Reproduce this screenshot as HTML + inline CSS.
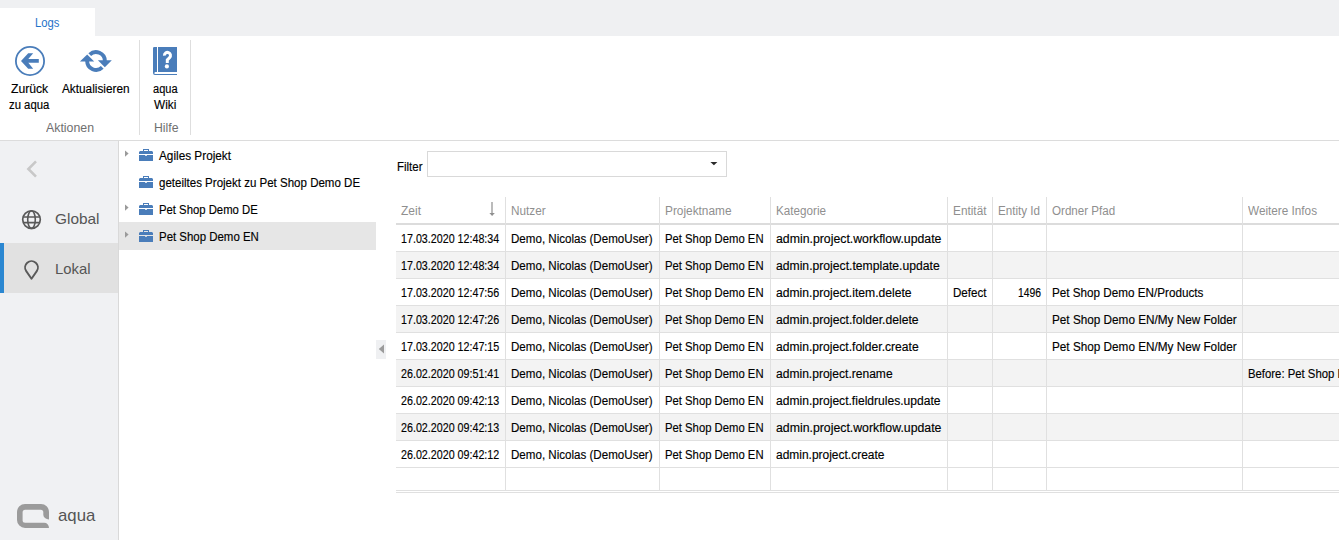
<!DOCTYPE html>
<html><head><meta charset="utf-8"><style>
html,body{margin:0;padding:0;}
body{width:1339px;height:540px;overflow:hidden;position:relative;background:#fff;font-family:"Liberation Sans",sans-serif;}
.t{position:absolute;white-space:nowrap;transform-origin:0 0;}
svg{display:block}
</style></head><body>
<div style="position:absolute;left:0;top:0;width:1339px;height:36px;background:#eff0f2"></div>
<div style="position:absolute;left:0;top:8px;width:95px;height:28px;background:#fff"></div>
<div class="t" style="left:35.4px;top:16.94px;font-size:12px;line-height:13.80px;color:#1f72c9;transform:scaleX(0.9379);">Logs</div>
<div style="position:absolute;left:0;top:140px;width:1339px;height:1px;background:#dcdcdc"></div>
<div style="position:absolute;left:139px;top:40px;width:1px;height:95px;background:#dedede"></div>
<div style="position:absolute;left:190px;top:40px;width:1px;height:95px;background:#dedede"></div>
<svg style="position:absolute;left:0;top:36px" width="60" height="50" viewBox="0 36 60 50">
<circle cx="30" cy="61" r="14.1" fill="none" stroke="#4a7dba" stroke-width="1.8"/>
<path d="M21,61 L28.2,53.3 L33.2,53.3 L28.3,59.1 L38.8,59.1 L38.8,62.8 L28.3,62.8 L33.2,68.7 L28.2,68.7 Z" fill="#4a7dba"/>
</svg>
<svg style="position:absolute;left:70px;top:40px" width="50" height="40" viewBox="70 40 50 40">
<path d="M89.74,54.74 A8.85,8.85 0 0 1 104.85,61" fill="none" stroke="#4a7dba" stroke-width="3.9"/>
<path d="M102.26,67.26 A8.85,8.85 0 0 1 87.15,61" fill="none" stroke="#4a7dba" stroke-width="3.9"/>
<path d="M79.9,61.6 L87.2,54.6 L94.2,61.6 Z" fill="#4a7dba"/>
<path d="M97.9,60.3 L111.8,60.3 L104.8,67.2 Z" fill="#4a7dba"/>
</svg>
<svg style="position:absolute;left:150px;top:44px" width="30" height="34" viewBox="150 44 30 34">
<path d="M154.2,47 H157 V72 H155.3 A1.3,1.3 0 0 0 154.3,73.2 A1,1 0 0 0 155.3,74 H177 V75 H155 A2,2 0 0 1 153,73 V48.2 A1.2,1.2 0 0 1 154.2,47 Z" fill="#4a7dba"/>
<rect x="158" y="47" width="19" height="25" fill="#4a7dba"/>
<path d="M164.4,55.6 A3.05,3.05 0 1 1 169.6,57.6 L167.3,59.8 V63" fill="none" stroke="#fff" stroke-width="3"/>
<circle cx="166.9" cy="66.4" r="2.1" fill="#fff"/>
</svg>
<div class="t" style="left:11px;top:82.94px;font-size:12px;line-height:13.80px;color:#000;-webkit-text-stroke:0.15px currentColor;transform:scaleX(1.0144);">Zurück</div>
<div class="t" style="left:9px;top:98.94px;font-size:12px;line-height:13.80px;color:#000;-webkit-text-stroke:0.15px currentColor;transform:scaleX(0.9441);">zu aqua</div>
<div class="t" style="left:62px;top:82.94px;font-size:12px;line-height:13.80px;color:#000;-webkit-text-stroke:0.15px currentColor;transform:scaleX(0.9825);">Aktualisieren</div>
<div class="t" style="left:152.5px;top:82.94px;font-size:12px;line-height:13.80px;color:#000;-webkit-text-stroke:0.15px currentColor;transform:scaleX(0.9180);">aqua</div>
<div class="t" style="left:154.4px;top:98.94px;font-size:12px;line-height:13.80px;color:#000;-webkit-text-stroke:0.15px currentColor;transform:scaleX(0.9836);">Wiki</div>
<div class="t" style="left:46px;top:121.94px;font-size:12px;line-height:13.80px;color:#6f6f6f;transform:scaleX(1.0281);">Aktionen</div>
<div class="t" style="left:153.5px;top:121.94px;font-size:12px;line-height:13.80px;color:#6f6f6f;transform:scaleX(1.0202);">Hilfe</div>
<div style="position:absolute;left:0;top:141px;width:118px;height:399px;background:#f0f1f3"></div>
<div style="position:absolute;left:118px;top:141px;width:1px;height:399px;background:#d9d9d9"></div>
<svg style="position:absolute;left:20px;top:155px" width="25" height="30" viewBox="20 155 25 30"><path d="M36,161.4 L28.4,169 L36,176.6" fill="none" stroke="#c8c8c8" stroke-width="2.6"/></svg>
<svg style="position:absolute;left:18px;top:206px" width="28" height="28" viewBox="18 206 28 28">
<circle cx="31.5" cy="219.6" r="8.8" fill="none" stroke="#595959" stroke-width="1.7"/>
<ellipse cx="31.5" cy="219.6" rx="3.8" ry="8.8" fill="none" stroke="#595959" stroke-width="1.6"/>
<path d="M23,217 H40 M23,222.6 H40" stroke="#595959" stroke-width="1.6"/>
</svg>
<div class="t" style="left:54.5px;top:210.42px;font-size:15px;line-height:17.25px;color:#555555;transform:scaleX(1.0263);">Global</div>
<div style="position:absolute;left:0;top:243px;width:118px;height:50px;background:#e1e1e1"></div>
<div style="position:absolute;left:0;top:243px;width:4px;height:50px;background:#2b87d1"></div>
<svg style="position:absolute;left:20px;top:256px" width="24" height="28" viewBox="20 256 24 28">
<path d="M31.5,278.8 L26.22,271.13 A6.4,6.4 0 1 1 36.78,271.13 Z" fill="none" stroke="#595959" stroke-width="1.9" stroke-linejoin="round"/>
</svg>
<div class="t" style="left:54.5px;top:260.42px;font-size:15px;line-height:17.25px;color:#555555;transform:scaleX(0.9900);">Lokal</div>
<svg style="position:absolute;left:17px;top:504px" width="32" height="24" viewBox="0 0 32 24">
<path d="M8,0 H24 A8,8 0 0 1 32,8 V15.5 A5.7,4.7 0 0 1 26.3,10.8 V8.3 A2.5,2.5 0 0 0 23.8,5.8 H8.1 A2.5,2.5 0 0 0 5.6,8.3 V16.3 A2.5,2.5 0 0 0 8.1,18.8 H27.2 A4.8,5.1 0 0 1 32,23.9 H8 A8,8 0 0 1 0,15.9 V8 A8,8 0 0 1 8,0 Z" fill="#9b9b9b"/>
</svg>
<div class="t" style="left:57.75px;top:505.61px;font-size:17px;line-height:19.55px;color:#555555;transform:scaleX(0.9864);">aqua</div>
<div style="position:absolute;left:119px;top:222px;width:257px;height:28px;background:#e6e6e6"></div>
<svg style="position:absolute;left:124px;top:150px" width="6" height="8" viewBox="0 0 6 8"><path d="M1,0.5 L4.6,3.6 L1,6.8 Z" fill="#9a9a9a"/></svg>
<svg style="position:absolute;left:139px;top:149px" width="14" height="12" viewBox="0 -2 14 12">
<path d="M4,0 V-2 H10 V0 H9 V-1 H5 V0 Z" fill="#4a7dba"/>
<path d="M1,0 H13 L14,1 V3 H0 V1 Z" fill="#4a7dba"/>
<path d="M0,4 H6 L6.5,5 H7.5 L8,4 H14 V10 H0 Z" fill="#4a7dba"/>
</svg>
<div class="t" style="left:159px;top:150.44px;font-size:12px;line-height:13.80px;color:#000;-webkit-text-stroke:0.15px currentColor;transform:scaleX(0.9815);">Agiles Projekt</div>
<svg style="position:absolute;left:139px;top:176px" width="14" height="12" viewBox="0 -2 14 12">
<path d="M4,0 V-2 H10 V0 H9 V-1 H5 V0 Z" fill="#4a7dba"/>
<path d="M1,0 H13 L14,1 V3 H0 V1 Z" fill="#4a7dba"/>
<path d="M0,4 H6 L6.5,5 H7.5 L8,4 H14 V10 H0 Z" fill="#4a7dba"/>
</svg>
<div class="t" style="left:159px;top:177.44px;font-size:12px;line-height:13.80px;color:#000;-webkit-text-stroke:0.15px currentColor;transform:scaleX(0.9600);">geteiltes Projekt zu Pet Shop Demo DE</div>
<svg style="position:absolute;left:124px;top:204px" width="6" height="8" viewBox="0 0 6 8"><path d="M1,0.5 L4.6,3.6 L1,6.8 Z" fill="#9a9a9a"/></svg>
<svg style="position:absolute;left:139px;top:203px" width="14" height="12" viewBox="0 -2 14 12">
<path d="M4,0 V-2 H10 V0 H9 V-1 H5 V0 Z" fill="#4a7dba"/>
<path d="M1,0 H13 L14,1 V3 H0 V1 Z" fill="#4a7dba"/>
<path d="M0,4 H6 L6.5,5 H7.5 L8,4 H14 V10 H0 Z" fill="#4a7dba"/>
</svg>
<div class="t" style="left:159px;top:204.44px;font-size:12px;line-height:13.80px;color:#000;-webkit-text-stroke:0.15px currentColor;transform:scaleX(0.9428);">Pet Shop Demo DE</div>
<svg style="position:absolute;left:124px;top:231px" width="6" height="8" viewBox="0 0 6 8"><path d="M1,0.5 L4.6,3.6 L1,6.8 Z" fill="#9a9a9a"/></svg>
<svg style="position:absolute;left:139px;top:230px" width="14" height="12" viewBox="0 -2 14 12">
<path d="M4,0 V-2 H10 V0 H9 V-1 H5 V0 Z" fill="#4a7dba"/>
<path d="M1,0 H13 L14,1 V3 H0 V1 Z" fill="#4a7dba"/>
<path d="M0,4 H6 L6.5,5 H7.5 L8,4 H14 V10 H0 Z" fill="#4a7dba"/>
</svg>
<div class="t" style="left:159px;top:231.44px;font-size:12px;line-height:13.80px;color:#000;-webkit-text-stroke:0.15px currentColor;transform:scaleX(0.9533);">Pet Shop Demo EN</div>
<div style="position:absolute;left:376px;top:340px;width:10px;height:19px;background:#eff0f2"></div>
<svg style="position:absolute;left:376px;top:340px" width="10" height="19" viewBox="376 340 10 19"><path d="M384,344.5 L378.8,349 L384,353.5 Z" fill="#9b9b9b"/></svg>
<div class="t" style="left:396.5px;top:160.94px;font-size:12px;line-height:13.80px;color:#000;-webkit-text-stroke:0.15px currentColor;transform:scaleX(0.9561);">Filter</div>
<div style="position:absolute;left:427px;top:151px;width:298px;height:24px;border:1px solid #d9d9d9;background:#fff"></div>
<svg style="position:absolute;left:708px;top:159px" width="12" height="9" viewBox="708 159 12 9"><path d="M710.4,162 L717.4,162 L713.9,165.3 Z" fill="#2a2a2a"/></svg>
<div style="position:absolute;left:396px;top:252px;width:943px;height:26px;background:#f3f3f3"></div>
<div style="position:absolute;left:396px;top:306px;width:943px;height:26px;background:#f3f3f3"></div>
<div style="position:absolute;left:396px;top:360px;width:943px;height:26px;background:#f3f3f3"></div>
<div style="position:absolute;left:396px;top:414px;width:943px;height:26px;background:#f3f3f3"></div>
<div style="position:absolute;left:396px;top:251px;width:943px;height:1px;background:#e0e0e0"></div>
<div style="position:absolute;left:396px;top:278px;width:943px;height:1px;background:#e0e0e0"></div>
<div style="position:absolute;left:396px;top:305px;width:943px;height:1px;background:#e0e0e0"></div>
<div style="position:absolute;left:396px;top:332px;width:943px;height:1px;background:#e0e0e0"></div>
<div style="position:absolute;left:396px;top:359px;width:943px;height:1px;background:#e0e0e0"></div>
<div style="position:absolute;left:396px;top:386px;width:943px;height:1px;background:#e0e0e0"></div>
<div style="position:absolute;left:396px;top:413px;width:943px;height:1px;background:#e0e0e0"></div>
<div style="position:absolute;left:396px;top:440px;width:943px;height:1px;background:#e0e0e0"></div>
<div style="position:absolute;left:396px;top:467px;width:943px;height:1px;background:#e0e0e0"></div>
<div style="position:absolute;left:396px;top:223px;width:943px;height:2px;background:#dcdcdc"></div>
<div style="position:absolute;left:396px;top:490px;width:943px;height:1px;background:#e0e0e0"></div>
<div style="position:absolute;left:396px;top:492px;width:943px;height:1px;background:#e0e0e0"></div>
<div style="position:absolute;left:505px;top:197px;width:1px;height:293px;background:#e0e0e0"></div>
<div style="position:absolute;left:659px;top:197px;width:1px;height:293px;background:#e0e0e0"></div>
<div style="position:absolute;left:770px;top:197px;width:1px;height:293px;background:#e0e0e0"></div>
<div style="position:absolute;left:947px;top:197px;width:1px;height:293px;background:#e0e0e0"></div>
<div style="position:absolute;left:992px;top:197px;width:1px;height:293px;background:#e0e0e0"></div>
<div style="position:absolute;left:1046px;top:197px;width:1px;height:293px;background:#e0e0e0"></div>
<div style="position:absolute;left:1242px;top:197px;width:1px;height:293px;background:#e0e0e0"></div>
<div class="t" style="left:401px;top:204.94px;font-size:12px;line-height:13.80px;color:#8f8f8f;transform:scaleX(1.0000);">Zeit</div>
<div class="t" style="left:511px;top:204.94px;font-size:12px;line-height:13.80px;color:#8f8f8f;transform:scaleX(0.9818);">Nutzer</div>
<div class="t" style="left:665px;top:204.94px;font-size:12px;line-height:13.80px;color:#8f8f8f;transform:scaleX(0.9872);">Projektname</div>
<div class="t" style="left:776px;top:204.94px;font-size:12px;line-height:13.80px;color:#8f8f8f;transform:scaleX(0.9735);">Kategorie</div>
<div class="t" style="left:953px;top:204.94px;font-size:12px;line-height:13.80px;color:#8f8f8f;transform:scaleX(0.9853);">Entität</div>
<div class="t" style="left:998px;top:204.94px;font-size:12px;line-height:13.80px;color:#8f8f8f;transform:scaleX(0.9693);">Entity Id</div>
<div class="t" style="left:1052px;top:204.94px;font-size:12px;line-height:13.80px;color:#8f8f8f;transform:scaleX(0.9672);">Ordner Pfad</div>
<div class="t" style="left:1248px;top:204.94px;font-size:12px;line-height:13.80px;color:#8f8f8f;transform:scaleX(0.9794);">Weitere Infos</div>
<svg style="position:absolute;left:486px;top:200px" width="12" height="18" viewBox="486 200 12 18"><rect x="491.4" y="202" width="1.2" height="11.5" fill="#8f8f8f"/><path d="M489.4,213 L494.8,213 L492.1,216 Z" fill="#8f8f8f"/></svg>
<div class="t" style="left:401.3px;top:232.94px;font-size:12px;line-height:13.80px;color:#000;-webkit-text-stroke:0.15px currentColor;transform:scaleX(0.8923);">17.03.2020 12:48:34</div>
<div class="t" style="left:511px;top:232.94px;font-size:12px;line-height:13.80px;color:#000;-webkit-text-stroke:0.15px currentColor;transform:scaleX(0.9651);">Demo, Nicolas (DemoUser)</div>
<div class="t" style="left:665px;top:232.94px;font-size:12px;line-height:13.80px;color:#000;-webkit-text-stroke:0.15px currentColor;transform:scaleX(0.9409);">Pet Shop Demo EN</div>
<div class="t" style="left:776px;top:232.94px;font-size:12px;line-height:13.80px;color:#000;-webkit-text-stroke:0.15px currentColor;transform:scaleX(1.0247);">admin.project.workflow.update</div>
<div class="t" style="left:401.3px;top:259.94px;font-size:12px;line-height:13.80px;color:#000;-webkit-text-stroke:0.15px currentColor;transform:scaleX(0.8923);">17.03.2020 12:48:34</div>
<div class="t" style="left:511px;top:259.94px;font-size:12px;line-height:13.80px;color:#000;-webkit-text-stroke:0.15px currentColor;transform:scaleX(0.9651);">Demo, Nicolas (DemoUser)</div>
<div class="t" style="left:665px;top:259.94px;font-size:12px;line-height:13.80px;color:#000;-webkit-text-stroke:0.15px currentColor;transform:scaleX(0.9409);">Pet Shop Demo EN</div>
<div class="t" style="left:776px;top:259.94px;font-size:12px;line-height:13.80px;color:#000;-webkit-text-stroke:0.15px currentColor;transform:scaleX(1.0137);">admin.project.template.update</div>
<div class="t" style="left:401.3px;top:286.94px;font-size:12px;line-height:13.80px;color:#000;-webkit-text-stroke:0.15px currentColor;transform:scaleX(0.8923);">17.03.2020 12:47:56</div>
<div class="t" style="left:511px;top:286.94px;font-size:12px;line-height:13.80px;color:#000;-webkit-text-stroke:0.15px currentColor;transform:scaleX(0.9651);">Demo, Nicolas (DemoUser)</div>
<div class="t" style="left:665px;top:286.94px;font-size:12px;line-height:13.80px;color:#000;-webkit-text-stroke:0.15px currentColor;transform:scaleX(0.9409);">Pet Shop Demo EN</div>
<div class="t" style="left:776px;top:286.94px;font-size:12px;line-height:13.80px;color:#000;-webkit-text-stroke:0.15px currentColor;transform:scaleX(1.0116);">admin.project.item.delete</div>
<div class="t" style="left:953px;top:286.94px;font-size:12px;line-height:13.80px;color:#000;-webkit-text-stroke:0.15px currentColor;transform:scaleX(0.9662);">Defect</div>
<div class="t" style="left:1018px;top:286.94px;font-size:12px;line-height:13.80px;color:#000;-webkit-text-stroke:0.15px currentColor;transform:scaleX(0.8618);">1496</div>
<div class="t" style="left:1052px;top:286.94px;font-size:12px;line-height:13.80px;color:#000;-webkit-text-stroke:0.15px currentColor;transform:scaleX(0.9745);">Pet Shop Demo EN/Products</div>
<div class="t" style="left:401.3px;top:313.94px;font-size:12px;line-height:13.80px;color:#000;-webkit-text-stroke:0.15px currentColor;transform:scaleX(0.8923);">17.03.2020 12:47:26</div>
<div class="t" style="left:511px;top:313.94px;font-size:12px;line-height:13.80px;color:#000;-webkit-text-stroke:0.15px currentColor;transform:scaleX(0.9651);">Demo, Nicolas (DemoUser)</div>
<div class="t" style="left:665px;top:313.94px;font-size:12px;line-height:13.80px;color:#000;-webkit-text-stroke:0.15px currentColor;transform:scaleX(0.9409);">Pet Shop Demo EN</div>
<div class="t" style="left:776px;top:313.94px;font-size:12px;line-height:13.80px;color:#000;-webkit-text-stroke:0.15px currentColor;transform:scaleX(1.0133);">admin.project.folder.delete</div>
<div class="t" style="left:1052px;top:313.94px;font-size:12px;line-height:13.80px;color:#000;-webkit-text-stroke:0.15px currentColor;transform:scaleX(0.9788);">Pet Shop Demo EN/My New Folder</div>
<div class="t" style="left:401.3px;top:340.94px;font-size:12px;line-height:13.80px;color:#000;-webkit-text-stroke:0.15px currentColor;transform:scaleX(0.8923);">17.03.2020 12:47:15</div>
<div class="t" style="left:511px;top:340.94px;font-size:12px;line-height:13.80px;color:#000;-webkit-text-stroke:0.15px currentColor;transform:scaleX(0.9651);">Demo, Nicolas (DemoUser)</div>
<div class="t" style="left:665px;top:340.94px;font-size:12px;line-height:13.80px;color:#000;-webkit-text-stroke:0.15px currentColor;transform:scaleX(0.9409);">Pet Shop Demo EN</div>
<div class="t" style="left:776px;top:340.94px;font-size:12px;line-height:13.80px;color:#000;-webkit-text-stroke:0.15px currentColor;transform:scaleX(1.0086);">admin.project.folder.create</div>
<div class="t" style="left:1052px;top:340.94px;font-size:12px;line-height:13.80px;color:#000;-webkit-text-stroke:0.15px currentColor;transform:scaleX(0.9788);">Pet Shop Demo EN/My New Folder</div>
<div class="t" style="left:401.3px;top:367.94px;font-size:12px;line-height:13.80px;color:#000;-webkit-text-stroke:0.15px currentColor;transform:scaleX(0.8923);">26.02.2020 09:51:41</div>
<div class="t" style="left:511px;top:367.94px;font-size:12px;line-height:13.80px;color:#000;-webkit-text-stroke:0.15px currentColor;transform:scaleX(0.9651);">Demo, Nicolas (DemoUser)</div>
<div class="t" style="left:665px;top:367.94px;font-size:12px;line-height:13.80px;color:#000;-webkit-text-stroke:0.15px currentColor;transform:scaleX(0.9409);">Pet Shop Demo EN</div>
<div class="t" style="left:776px;top:367.94px;font-size:12px;line-height:13.80px;color:#000;-webkit-text-stroke:0.15px currentColor;transform:scaleX(1.0048);">admin.project.rename</div>
<div class="t" style="left:1248px;top:367.94px;font-size:12px;line-height:13.80px;color:#000;-webkit-text-stroke:0.15px currentColor;transform:scaleX(0.9448);">Before: Pet Shop Demo</div>
<div class="t" style="left:401.3px;top:394.94px;font-size:12px;line-height:13.80px;color:#000;-webkit-text-stroke:0.15px currentColor;transform:scaleX(0.8923);">26.02.2020 09:42:13</div>
<div class="t" style="left:511px;top:394.94px;font-size:12px;line-height:13.80px;color:#000;-webkit-text-stroke:0.15px currentColor;transform:scaleX(0.9651);">Demo, Nicolas (DemoUser)</div>
<div class="t" style="left:665px;top:394.94px;font-size:12px;line-height:13.80px;color:#000;-webkit-text-stroke:0.15px currentColor;transform:scaleX(0.9409);">Pet Shop Demo EN</div>
<div class="t" style="left:776px;top:394.94px;font-size:12px;line-height:13.80px;color:#000;-webkit-text-stroke:0.15px currentColor;transform:scaleX(1.0067);">admin.project.fieldrules.update</div>
<div class="t" style="left:401.3px;top:421.94px;font-size:12px;line-height:13.80px;color:#000;-webkit-text-stroke:0.15px currentColor;transform:scaleX(0.8923);">26.02.2020 09:42:13</div>
<div class="t" style="left:511px;top:421.94px;font-size:12px;line-height:13.80px;color:#000;-webkit-text-stroke:0.15px currentColor;transform:scaleX(0.9651);">Demo, Nicolas (DemoUser)</div>
<div class="t" style="left:665px;top:421.94px;font-size:12px;line-height:13.80px;color:#000;-webkit-text-stroke:0.15px currentColor;transform:scaleX(0.9409);">Pet Shop Demo EN</div>
<div class="t" style="left:776px;top:421.94px;font-size:12px;line-height:13.80px;color:#000;-webkit-text-stroke:0.15px currentColor;transform:scaleX(1.0247);">admin.project.workflow.update</div>
<div class="t" style="left:401.3px;top:448.94px;font-size:12px;line-height:13.80px;color:#000;-webkit-text-stroke:0.15px currentColor;transform:scaleX(0.8923);">26.02.2020 09:42:12</div>
<div class="t" style="left:511px;top:448.94px;font-size:12px;line-height:13.80px;color:#000;-webkit-text-stroke:0.15px currentColor;transform:scaleX(0.9651);">Demo, Nicolas (DemoUser)</div>
<div class="t" style="left:665px;top:448.94px;font-size:12px;line-height:13.80px;color:#000;-webkit-text-stroke:0.15px currentColor;transform:scaleX(0.9409);">Pet Shop Demo EN</div>
<div class="t" style="left:776px;top:448.94px;font-size:12px;line-height:13.80px;color:#000;-webkit-text-stroke:0.15px currentColor;transform:scaleX(0.9972);">admin.project.create</div>
</body></html>
